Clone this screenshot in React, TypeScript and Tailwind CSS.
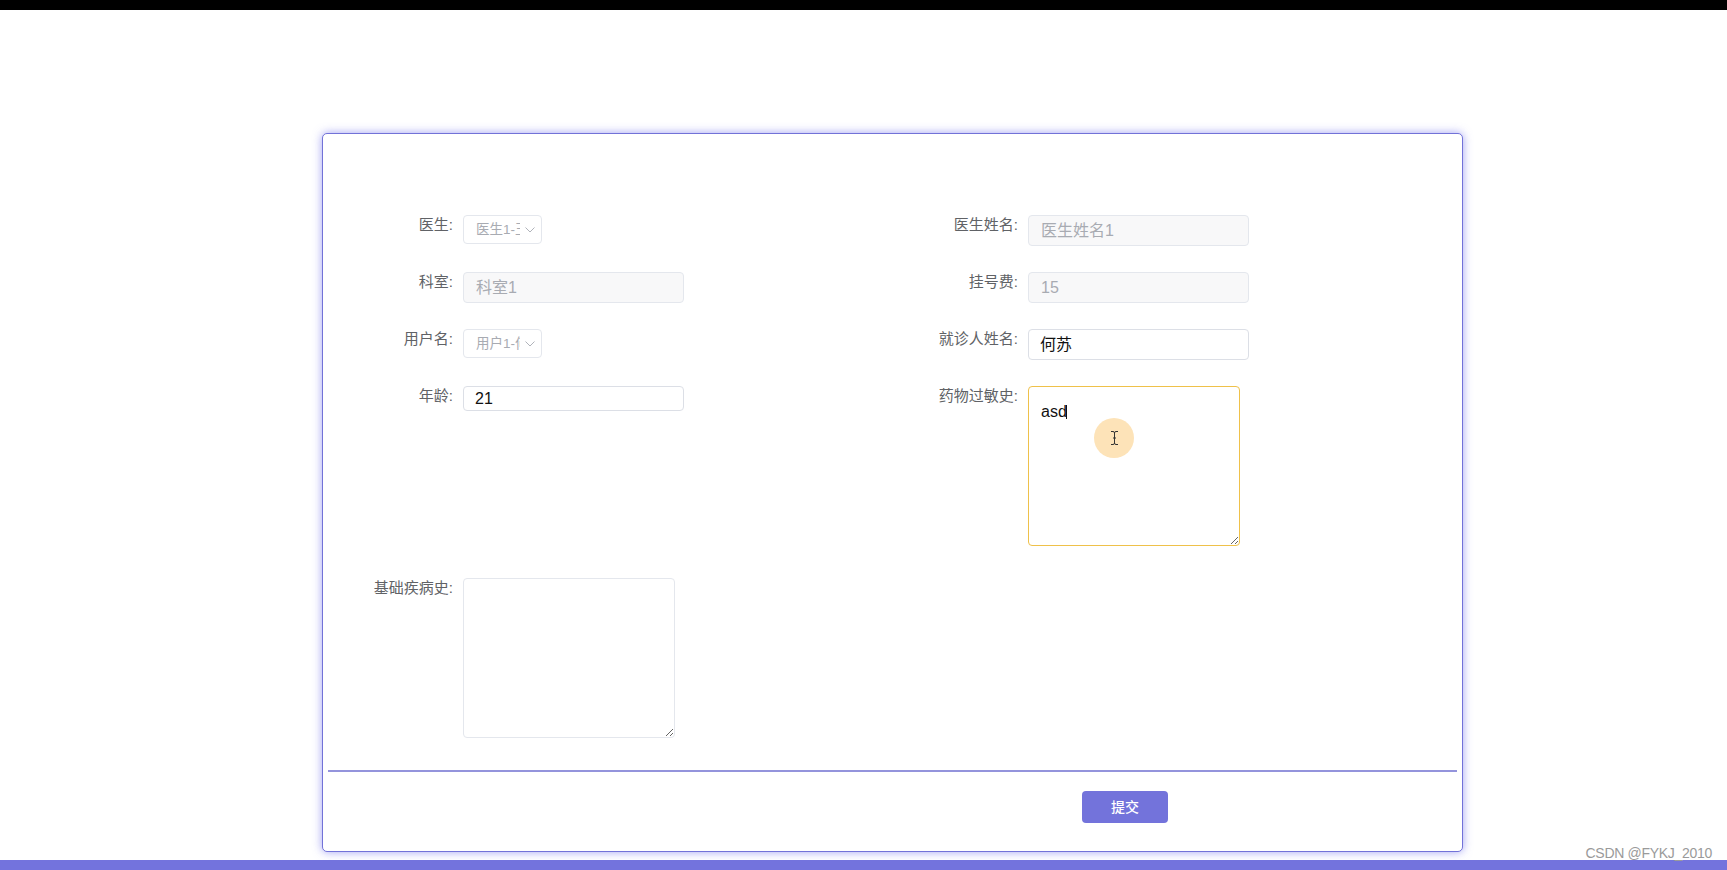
import React from "react";

function Label({ text }: { text: string }) {
  return (
    <div className="w-[120px] shrink-0 text-right text-[15px] leading-[20px] text-[#606266]">
      {text}:
    </div>
  );
}

function Chevron() {
  return (
    <svg width="10" height="6" viewBox="0 0 10 6" className="shrink-0">
      <polyline points="0.5,0.5 5,5 9.5,0.5" fill="none" stroke="#b0b3ba" strokeWidth="1" />
    </svg>
  );
}

function SelectBox({ text }: { text: string }) {
  return (
    <div className="w-[79px] h-[29px] border border-[#e4e7ed] rounded-[4px] bg-white flex items-center pl-[12px] pr-[6px]">
      <span className="w-[44px] overflow-hidden whitespace-nowrap text-[13.5px] leading-[18px] text-[#a8abb2]">
        {text}
      </span>
      <span className="ml-auto">
        <Chevron />
      </span>
    </div>
  );
}

function DisabledInput({ text }: { text: string }) {
  return (
    <div className="w-[221px] h-[31px] border border-[#e4e7ed] rounded-[4px] bg-[#f8f8f9] flex items-center px-[12px] text-[16px] text-[#a8abb2]">
      {text}
    </div>
  );
}

function TextInput({ text, h }: { text: string; h: string }) {
  return (
    <div
      className={
        "w-[221px] border border-[#dcdfe6] rounded-[4px] bg-white flex items-center px-[11px] text-[16px] text-[#111] " +
        h
      }
    >
      {text}
    </div>
  );
}

function Field({
  label,
  children,
}: {
  label: string;
  children: React.ReactNode;
}) {
  return (
    <div className="w-[565px] shrink-0 flex items-start">
      <Label text={label} />
      <div className="ml-[10px]">{children}</div>
    </div>
  );
}

export default function App() {
  return (
    <div className="relative w-[1727px] h-[870px] overflow-hidden bg-white font-['Liberation_Sans','Noto_Sans_CJK_SC',sans-serif]">
      <div className="h-[10px] bg-black" />
      <div className="pt-[123px] pl-[322px]">
        <div className="w-[1141px] h-[719px] border border-[#7272d8] rounded-[5px] bg-white shadow-[0_0_10px_rgba(100,100,235,0.6)] flex flex-col">
          <div className="pt-[81px] pl-[10px] flex flex-col">
            <div className="h-[57px] flex">
              <Field label="医生">
                <SelectBox text="医生1-王医生" />
              </Field>
              <Field label="医生姓名">
                <DisabledInput text="医生姓名1" />
              </Field>
            </div>
            <div className="h-[57px] flex">
              <Field label="科室">
                <DisabledInput text="科室1" />
              </Field>
              <Field label="挂号费">
                <DisabledInput text="15" />
              </Field>
            </div>
            <div className="h-[57px] flex">
              <Field label="用户名">
                <SelectBox text="用户1-何苏" />
              </Field>
              <Field label="就诊人姓名">
                <TextInput text="何苏" h="h-[31px]" />
              </Field>
            </div>
            <div className="h-[192px] flex">
              <Field label="年龄">
                <TextInput text="21" h="h-[25px]" />
              </Field>
              <Field label="药物过敏史">
                <div className="relative w-[212px] h-[160px]">
                  <textarea
                    readOnly
                    defaultValue="asd"
                    className="block w-[212px] h-[160px] border border-[#efc14a] rounded-[4px] bg-white pl-[12px] pt-[15px] text-[16px] leading-[20px] text-[#111] outline-none"
                  />
                  <div className="absolute left-[38px] top-[19px] w-[1px] h-[14px] bg-[#111]" />
                  <div className="absolute left-[66px] top-[32px] w-[40px] h-[40px] rounded-full bg-[#fde3b8] flex items-center justify-center">
                    <svg width="9" height="16" viewBox="0 0 9 16">
                      <path
                        d="M1 1.5 H3 Q4.5 1.5 4.5 3 V13 Q4.5 14.5 3 14.5 H1 M8 1.5 H6 Q4.5 1.5 4.5 3 M8 14.5 H6 Q4.5 14.5 4.5 13 M3 8 H6"
                        fill="none"
                        stroke="#333"
                        strokeWidth="1"
                      />
                    </svg>
                  </div>
                </div>
              </Field>
            </div>
            <div className="h-[160px] flex">
              <Field label="基础疾病史">
                <textarea
                  readOnly
                  defaultValue=""
                  className="block w-[212px] h-[160px] border border-[#e4e7ed] rounded-[4px] bg-white pl-[12px] pt-[8px] text-[16px] outline-none"
                />
              </Field>
            </div>
          </div>
          <div className="mt-[32px] mx-[5px] h-[2px] bg-[#9494dc]" />
          <div className="mt-[19px] ml-[759px]">
            <button className="w-[86px] h-[32px] rounded-[4px] bg-[#7373db] text-white text-[14px] font-medium flex items-center justify-center">
              提交
            </button>
          </div>
        </div>
      </div>
      <div className="mt-[8px] h-[10px] bg-[#7373dd]" />
      <div className="absolute right-[15px] bottom-[9px] text-[14px] leading-[16px] text-[#9a9a9a] tracking-[-0.3px]">
        CSDN @FYKJ_2010
      </div>
    </div>
  );
}
